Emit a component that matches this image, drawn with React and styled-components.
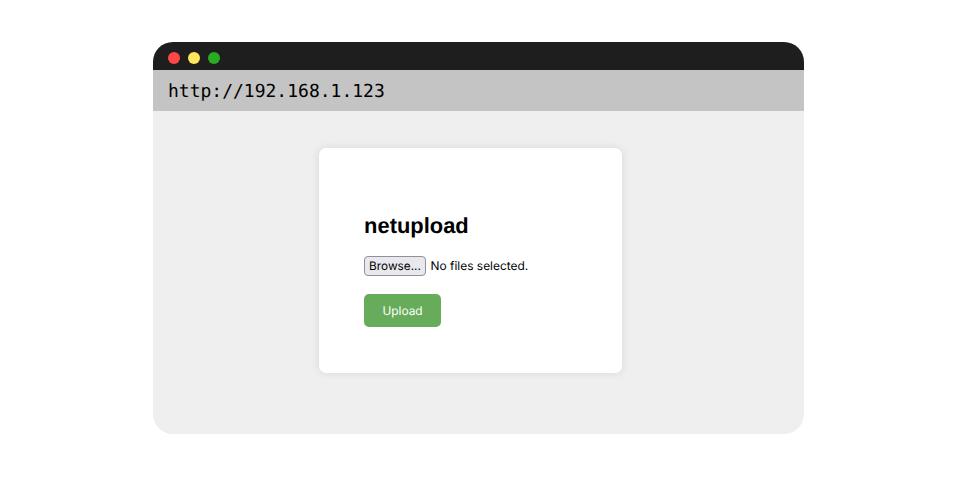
import React from "react";
import styled, { createGlobalStyle } from "styled-components";

const GlobalStyle = createGlobalStyle`
  * { box-sizing: border-box; }
  body { margin: 0; background: #fff; text-rendering: geometricPrecision; }
  button { text-rendering: inherit; }
`;
const Page = styled.div`
  height: 498px;
  padding: 42px 153px 0;
`;
const Browser = styled.div`
  width: 651px;
  height: 392px;
  border-radius: 20px;
  overflow: hidden;
  background: #efefef;
`;
const TitleBar = styled.div`
  height: 28px;
  background: #1e1e1e;
  display: flex;
  gap: 8px;
  padding: 10px 15px 0;
`;
const Light = styled.span`
  width: 12px;
  height: 12px;
  border-radius: 50%;
  background: ${(p) => p.$color};
`;
const AddressBar = styled.div`
  height: 41px;
  background: #c4c4c4;
  padding: 1px 15px 0;
  font: 18px/41px "DejaVu Sans Mono", monospace;
  color: #000;
`;
const Viewport = styled.main`
  display: flex;
  justify-content: center;
  padding: 37px 17px 0 0;
`;
const Card = styled.section`
  width: 303px;
  height: 225px;
  border-radius: 7px;
  background: #fff;
  box-shadow: 0 0 9px rgba(0, 0, 0, 0.1);
  padding: 64px 45px 0;
`;
const Heading = styled.h1`
  margin: 0 0 17px;
  padding-left: 0.6px;
  font: bold 21.9px/27px "Liberation Sans", sans-serif;
`;
const FileRow = styled.div`
  display: flex;
  align-items: center;
  gap: 5px;
  height: 20px;
  font: 11.95px/20px Inter, sans-serif;
  white-space: nowrap;
`;
const BrowseButton = styled.button`
  width: 62px;
  height: 20px;
  padding: 0 0 0 1px;
  border: 1px solid #8f8f9d;
  border-radius: 4px;
  background: #e9e9ed;
  color: #000;
  font: 11.8px/18px Inter, sans-serif;
`;
const UploadButton = styled.button`
  display: block;
  margin-top: 18px;
  width: 77px;
  height: 33px;
  padding: 0 0 0 1px;
  border: 0;
  border-radius: 5px;
  background: #67ac5b;
  color: #fff;
  font: 11.9px/33px Inter, sans-serif;
`;

export default function App() {
  return (
    <Page>
      <GlobalStyle />
      <Browser>
        <TitleBar>
          <Light $color="#ff4747" />
          <Light $color="#ffe55c" />
          <Light $color="#2aac20" />
        </TitleBar>
        <AddressBar>http://192.168.1.123</AddressBar>
        <Viewport>
          <Card>
            <Heading>netupload</Heading>
            <FileRow>
              <BrowseButton>Browse...</BrowseButton>
              <span>No files selected.</span>
            </FileRow>
            <UploadButton>Upload</UploadButton>
          </Card>
        </Viewport>
      </Browser>
    </Page>
  );
}
